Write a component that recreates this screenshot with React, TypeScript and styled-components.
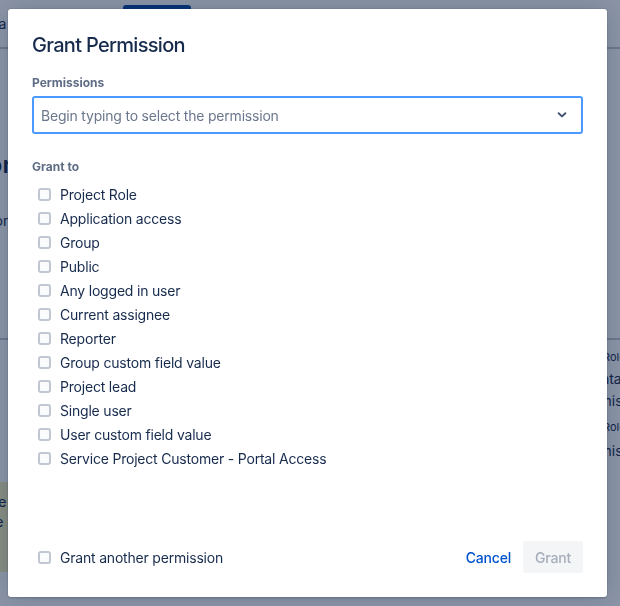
import * as React from "react";
import styled, { createGlobalStyle } from "styled-components";

const GlobalStyle = createGlobalStyle`
  html, body {
    margin: 0;
    padding: 0;
    height: 100%;
  }
  body {
    font-family: Inter, Roboto, "Noto Sans", "Liberation Sans", sans-serif;
    color: #172b4d;
    -webkit-font-smoothing: antialiased;
  }
`;

/* ---------- page behind the dialog ---------- */

const Page = styled.div`
  position: relative;
  width: 100%;
  height: 100vh;
  overflow: hidden;
  background: #ffffff;
`;

const TopBar = styled.div`
  display: flex;
  align-items: center;
  height: 47px;
  border-bottom: 2px solid #c1c7d0;
`;

const NavText = styled.span`
  flex: 0 0 147px;
  margin-left: -24px;
  font-size: 14px;
  white-space: nowrap;
`;

const PrimaryButton = styled.div`
  align-self: flex-start;
  margin-top: 5px;
  width: 68px;
  height: 32px;
  border-radius: 3px;
  background: #0747a6;
`;

const Section = styled.div<{ $height: number; $divider?: boolean }>`
  display: grid;
  grid-template-columns: 527px 1fr;
  height: ${p => p.$height}px;
  border-bottom: ${p => (p.$divider ? "2px solid #c1c7d0" : "none")};
`;

const LeftCol = styled.div<{ $pad: number }>`
  display: flex;
  flex-direction: column;
  padding-top: ${p => p.$pad}px;
  margin-left: -112px;
`;

const RightCol = styled.div<{ $pad: number }>`
  display: flex;
  flex-direction: column;
  padding-top: ${p => p.$pad}px;
  font-size: 14px;
  white-space: nowrap;
`;

const PageHeading = styled.h1`
  margin: 0;
  font-size: 24px;
  line-height: 28px;
  font-weight: 600;
`;

const PageText = styled.p<{ $top: number; $small?: boolean }>`
  margin: ${p => p.$top}px 0 0;
  font-size: ${p => (p.$small ? 12 : 14)}px;
  line-height: 20px;
  white-space: nowrap;
`;

const InfoBox = styled.div`
  margin-top: 20px;
  height: 90px;
  padding: 10px 0 0;
  background: #f6f0b8;
  font-size: 14px;
  line-height: 20px;
  white-space: nowrap;
  box-sizing: border-box;
`;

const RowText = styled.div<{ $top: number; $small?: boolean }>`
  margin-top: ${p => p.$top}px;
  margin-left: ${p => (p.$small ? 76 : 50)}px;
  font-size: ${p => (p.$small ? 11 : 14)}px;
  line-height: 18px;
`;

const TableHeader = styled.div`
  font-size: 14px;
  font-weight: 700;
  line-height: 18px;
  padding-top: 3px;
`;

/* ---------- blanket and dialog ---------- */

const Blanket = styled.div`
  position: fixed;
  inset: 0;
  background: rgba(9, 30, 66, 0.48);
`;

const Dialog = styled.div`
  position: absolute;
  left: 8px;
  top: 9px;
  width: 599px;
  height: 588px;
  box-sizing: border-box;
  padding: 24px;
  display: flex;
  flex-direction: column;
  background: #ffffff;
  border-radius: 3px;
  letter-spacing: -0.2px;
  box-shadow: 0 0 0 1px rgba(9, 30, 66, 0.08), 0 2px 1px rgba(9, 30, 66, 0.08),
    0 0 20px -6px rgba(9, 30, 66, 0.31);
`;

const Title = styled.h2`
  margin: 0;
  font-size: 20px;
  line-height: 24px;
  font-weight: 500;
  color: #172b4d;
  letter-spacing: -0.7px;
`;

const Body = styled.div`
  flex: 1;
  display: flex;
  flex-direction: column;
`;

const FieldLabel = styled.label<{ $top: number }>`
  display: block;
  margin-top: ${p => p.$top}px;
  font-size: 12px;
  line-height: 16px;
  font-weight: 700;
  color: #5e6c84;
  letter-spacing: 0;
`;

const SelectBox = styled.div`
  margin-top: 5px;
  height: 38px;
  box-sizing: border-box;
  display: flex;
  align-items: center;
  justify-content: space-between;
  padding: 0 14px 0 7px;
  border: 2px solid #4c9aff;
  border-radius: 3px;
  background: #ffffff;
`;

const Placeholder = styled.span`
  font-size: 14px;
  color: #6b778c;
`;

const OptionList = styled.div`
  margin-top: 7px;
  display: flex;
  flex-direction: column;
`;

const CheckRow = styled.label`
  display: flex;
  align-items: center;
  height: 24px;
  font-size: 14px;
  color: #172b4d;
  cursor: pointer;
`;

const CheckSlot = styled.span`
  width: 24px;
  height: 24px;
  display: flex;
  align-items: center;
  justify-content: center;
  margin-right: 4px;
`;

const CheckBox = styled.span`
  width: 13px;
  height: 13px;
  box-sizing: border-box;
  border: 2px solid #c1c7d0;
  border-radius: 3px;
  background: #fafbfc;
`;

const Footer = styled.div`
  display: flex;
  align-items: center;
  justify-content: space-between;
  padding-top: 1px;
`;

const Actions = styled.div`
  display: flex;
  align-items: center;
  gap: 2px;
`;

const Button = styled.button<{ $disabled?: boolean }>`
  height: 32px;
  padding: 0 ${p => (p.$disabled ? 12 : 10)}px;
  border: none;
  border-radius: 3px;
  font-family: inherit;
  font-size: 14px;
  font-weight: 500;
  letter-spacing: -0.2px;
  background: ${p => (p.$disabled ? "#f4f5f7" : "transparent")};
  color: ${p => (p.$disabled ? "#a5adba" : "#0052cc")};
  cursor: ${p => (p.$disabled ? "not-allowed" : "pointer")};
`;

const Chevron = () => (
  <svg width="10" height="8" viewBox="0 0 10 8" aria-hidden>
    <path
      d="M1.6 2.2 L5 5.4 L8.4 2.2"
      fill="none"
      stroke="#42526e"
      strokeWidth="1.9"
      strokeLinecap="round"
      strokeLinejoin="round"
    />
  </svg>
);

const Checkbox: React.FC<{ label: string }> = ({ label }) => (
  <CheckRow>
    <CheckSlot>
      <CheckBox />
    </CheckSlot>
    {label}
  </CheckRow>
);

const grantOptions = [
  "Project Role",
  "Application access",
  "Group",
  "Public",
  "Any logged in user",
  "Current assignee",
  "Reporter",
  "Group custom field value",
  "Project lead",
  "Single user",
  "User custom field value",
  "Service Project Customer - Portal Access",
];

const App: React.FC = () => (
  <>
    <GlobalStyle />
    <Page>
      <TopBar>
        <NavText>Data Center</NavText>
        <PrimaryButton />
      </TopBar>
      <Section $height={289} $divider>
        <LeftCol $pad={102}>
          <PageHeading>Permissions</PageHeading>
          <PageText $top={32}>Project permissions</PageText>
        </LeftCol>
        <RightCol $pad={0} />
      </Section>
      <Section $height={262}>
        <LeftCol $pad={102}>
          <PageText $top={0} $small>
            Notification fields
          </PageText>
          <InfoBox>
            <div>Permission queue</div>
            <div>Permission of the</div>
            <div>Permissions.</div>
          </InfoBox>
        </LeftCol>
        <RightCol $pad={8}>
          <RowText $top={0} $small>
            Role
          </RowText>
          <RowText $top={4}>Maintain</RowText>
          <RowText $top={4}>Permission</RowText>
          <RowText $top={8} $small>
            Role
          </RowText>
          <RowText $top={6}>Permission</RowText>
        </RightCol>
      </Section>
      <Section $height={40}>
        <LeftCol $pad={0} />
        <RightCol $pad={0}>
          <TableHeader>Project Role</TableHeader>
        </RightCol>
      </Section>
      <Blanket />
      <Dialog role="dialog" aria-label="Grant Permission">
        <Title>Grant Permission</Title>
        <Body>
          <FieldLabel $top={18}>Permissions</FieldLabel>
          <SelectBox>
            <Placeholder>Begin typing to select the permission</Placeholder>
            <Chevron />
          </SelectBox>
          <FieldLabel $top={25}>Grant to</FieldLabel>
          <OptionList>
            {grantOptions.map(option => (
              <Checkbox key={option} label={option} />
            ))}
          </OptionList>
        </Body>
        <Footer>
          <Checkbox label="Grant another permission" />
          <Actions>
            <Button>Cancel</Button>
            <Button $disabled disabled>
              Grant
            </Button>
          </Actions>
        </Footer>
      </Dialog>
    </Page>
  </>
);

export default App;
